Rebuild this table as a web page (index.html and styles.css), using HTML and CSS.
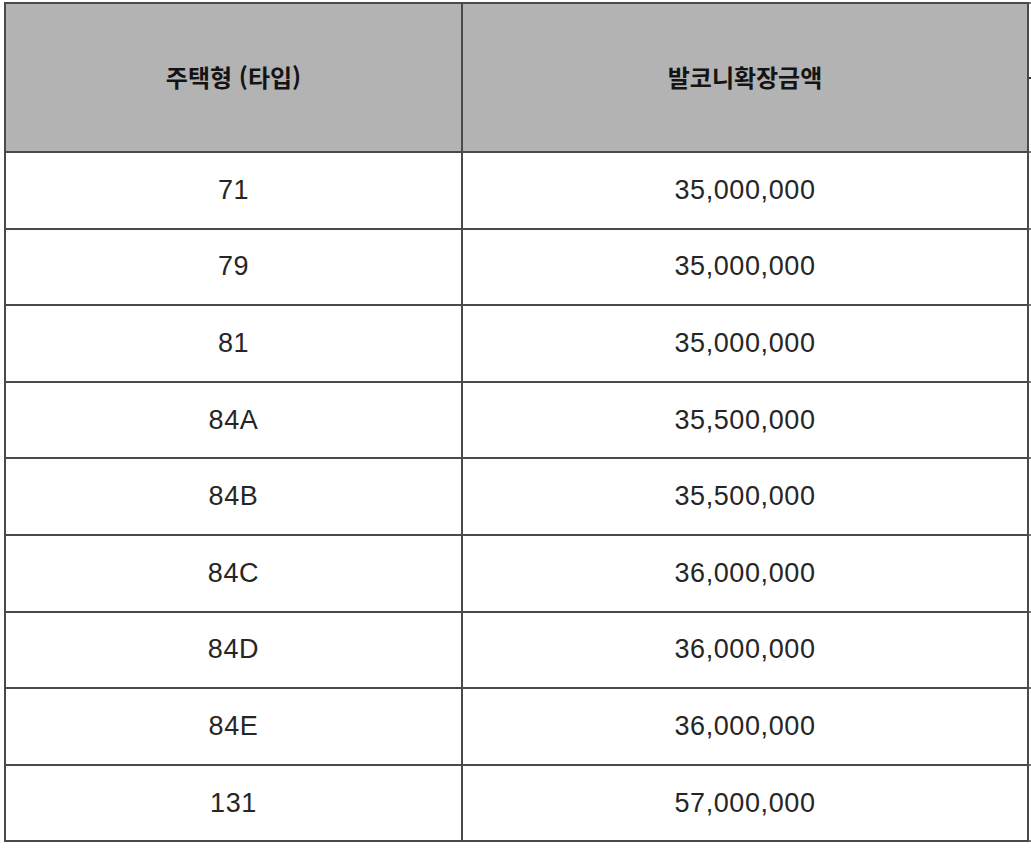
FILE: index.html
```html
<!DOCTYPE html>
<html lang="ko">
<head>
<meta charset="utf-8">
<title>발코니확장금액</title>
<link rel="stylesheet" href="styles.css">
</head>
<body>
<div class="page">
  <table class="price-table">
    <thead>
      <tr>
        <th class="col-type">주택형 (타입)</th>
        <th class="col-price">발코니확장금액</th>
        <th class="col-extra"><div class="extra-split"></div></th>
      </tr>
    </thead>
    <tbody>
      <tr><td>71</td><td>35,000,000</td><td class="col-extra"></td></tr>
      <tr><td>79</td><td>35,000,000</td><td class="col-extra"></td></tr>
      <tr><td>81</td><td>35,000,000</td><td class="col-extra"></td></tr>
      <tr><td>84A</td><td>35,500,000</td><td class="col-extra"></td></tr>
      <tr><td>84B</td><td>35,500,000</td><td class="col-extra"></td></tr>
      <tr><td>84C</td><td>36,000,000</td><td class="col-extra"></td></tr>
      <tr><td>84D</td><td>36,000,000</td><td class="col-extra"></td></tr>
      <tr><td>84E</td><td>36,000,000</td><td class="col-extra"></td></tr>
      <tr><td>131</td><td>57,000,000</td><td class="col-extra"></td></tr>
    </tbody>
  </table>
</div>
</body>
</html>
```
FILE: styles.css
```css
html, body {
  margin: 0;
  padding: 0;
  background: #ffffff;
  overflow: hidden;
}

.page {
  width: 1031px;
  height: 856px;
  overflow: hidden;
  padding: 2px 0 0 4px;
  box-sizing: border-box;
}

.price-table {
  border-collapse: collapse;
  table-layout: fixed;
  width: 1043px;
}

.price-table th,
.price-table td {
  border: 2px solid #4a4a4a;
  padding: 0;
  text-align: center;
  vertical-align: middle;
}

.price-table th {
  height: 144px;
  padding-bottom: 3px;
  background: #b3b3b3;
  color: #141414;
  font-family: "Noto Sans CJK KR", "Noto Sans", sans-serif;
  font-weight: 700;
  font-size: 24px;
}

.price-table td {
  height: 74.6px;
  font-family: "Liberation Sans", Arial, sans-serif;
  font-size: 27px;
  letter-spacing: 0.6px;
  color: #262626;
}

.col-type {
  width: 455px;
}

.col-price {
  width: 564px;
}

.price-table .col-extra {
  width: 20px;
  background: #ffffff;
  border-color: #777777;
  vertical-align: top;
}

.extra-split {
  height: 73px;
  border-bottom: 2px solid #333333;
}
```
